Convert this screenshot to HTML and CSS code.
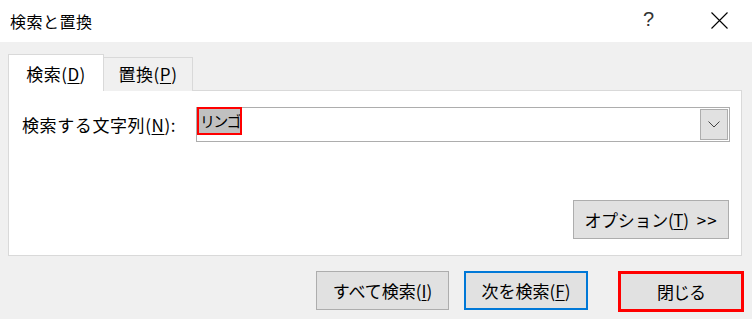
FILE: index.html
```html
<!DOCTYPE html>
<html lang="ja">
<head>
<meta charset="utf-8">
<link rel="stylesheet" href="styles.css">
</head>
<body>
<div class="dialog">
  <div class="titlebar">
    <span class="title">検索と置換</span>
    <span class="help">?</span>
    <svg class="close-x" width="17" height="17" viewBox="0 0 17 17"><path d="M0.5 0.5 L16.5 16.5 M16.5 0.5 L0.5 16.5" stroke="#000" stroke-width="1.1" fill="none"/></svg>
  </div>
  <div class="body">
    <div class="tabs">
      <div class="tab active">検索(<u>D</u>)</div>
      <div class="tab">置換(<u>P</u>)</div>
    </div>
    <div class="panel">
      <div class="find-row">
        <label class="label">検索する文字列(<u>N</u>):</label>
        <div class="combo">
          <span class="sel">リンゴ</span>
          <span class="drop">
            <svg width="12" height="7" viewBox="0 0 12 7"><path d="M0.5 0.5 L6 6 L11.5 0.5" stroke="#444" stroke-width="1" fill="none"/></svg>
          </span>
        </div>
      </div>
      <div class="opt-row">
        <button class="btn opt">オプション(<u>T</u>)<span class="arrows">&gt;&gt;</span></button>
      </div>
    </div>
    <div class="actions">
      <button class="btn all">すべて検索(<u>I</u>)</button>
      <button class="btn next">次を検索(<u>F</u>)</button>
      <button class="btn closebtn">閉じる</button>
    </div>
  </div>
</div>
</body>
</html>
```
FILE: styles.css
```css
* { box-sizing: border-box; }
html, body {
  margin: 0;
  padding: 0;
  background: #f0f0f0;
  width: 752px;
  height: 319px;
  overflow: hidden;
}
body {
  font-family: "Noto Sans CJK JP", "Noto Sans", sans-serif;
  font-size: 17px;
  color: #000;
}
u { text-decoration: underline; text-underline-offset: 2px; text-decoration-thickness: 1px; }

.titlebar {
  height: 42px;
  background: #fff;
  display: flex;
  align-items: center;
  padding-left: 10px;
}
.title { flex: 1; font-size: 16px; letter-spacing: 0.5px; }
.help {
  font-family: "Liberation Sans", sans-serif;
  font-size: 20px;
  color: #333;
  margin-right: 57px;
  margin-top: -3px;
}
.close-x { margin-right: 24px; margin-top: -1px; }

.body {
  padding: 12px 10px 0 8px;
}
.tabs {
  display: flex;
  align-items: flex-end;
  height: 37px;
  margin-bottom: -1px;
  position: relative;
  z-index: 1;
}
.tab {
  height: 34px;
  width: 89px;
  border: 1px solid #d9d9d9;
  border-bottom: none;
  border-left: none;
  background: #f0f0f0;
  display: flex;
  align-items: center;
  justify-content: center;
  padding-bottom: 2px;
  font-size: 17px;
  letter-spacing: 0.5px;
}
.tab.active {
  height: 37px;
  width: 96px;
  background: #fff;
  border-left: 1px solid #d9d9d9;
  border-right: 1px solid #d9d9d9;
  padding-bottom: 0;
}
.panel {
  height: 166px;
  background: #fff;
  border: 1px solid #d9d9d9;
  padding: 16px 12px 0 13px;
}
.find-row {
  display: flex;
  align-items: center;
  height: 35px;
}
.label {
  width: 174px;
  font-size: 17px;
  white-space: nowrap;
  letter-spacing: 0.6px;
}
.combo {
  flex: 1;
  margin-right: -1px;
  height: 35px;
  border: 1px solid #adadad;
  background: #fff;
  display: flex;
  align-items: flex-start;
  justify-content: space-between;
}
.sel {
  margin-top: -1px;
  height: 28px;
  width: 45px;
  border: 2px solid #ff0000;
  background: #c0c0c0;
  padding: 0 0 0 1px;
  line-height: 23px;
  font-size: 15px;
  letter-spacing: -1.8px;
  white-space: nowrap;
  overflow: hidden;
}
.drop {
  width: 28px;
  height: 31px;
  margin: 1px 1px 0 0;
  background: #e1e1e1;
  border: 1px solid #adadad;
  display: flex;
  align-items: center;
  justify-content: center;
}
.opt-row {
  display: flex;
  justify-content: flex-end;
  margin-top: 58px;
}
.btn {
  font-family: "Noto Sans CJK JP", "Noto Sans", sans-serif;
  font-size: 17px;
  color: #000;
  background: #e1e1e1;
  border: 1px solid #adadad;
  height: 39px;
  padding: 0;
  display: flex;
  align-items: center;
  justify-content: center;
  white-space: nowrap;
}
.opt { width: 156px; letter-spacing: -0.3px; }
.arrows { margin-left: 8px; letter-spacing: 1px; }
.actions {
  display: flex;
  justify-content: flex-end;
  align-items: flex-start;
  margin-top: 15px;
  margin-right: -2px;
}
.all { width: 133px; }
.next { width: 124px; margin-left: 15px; border: 2px solid #0078d7; }
.closebtn { width: 126px; height: 41px; margin-left: 30px; border: 3px solid #ff0000; letter-spacing: -1px; }
```
